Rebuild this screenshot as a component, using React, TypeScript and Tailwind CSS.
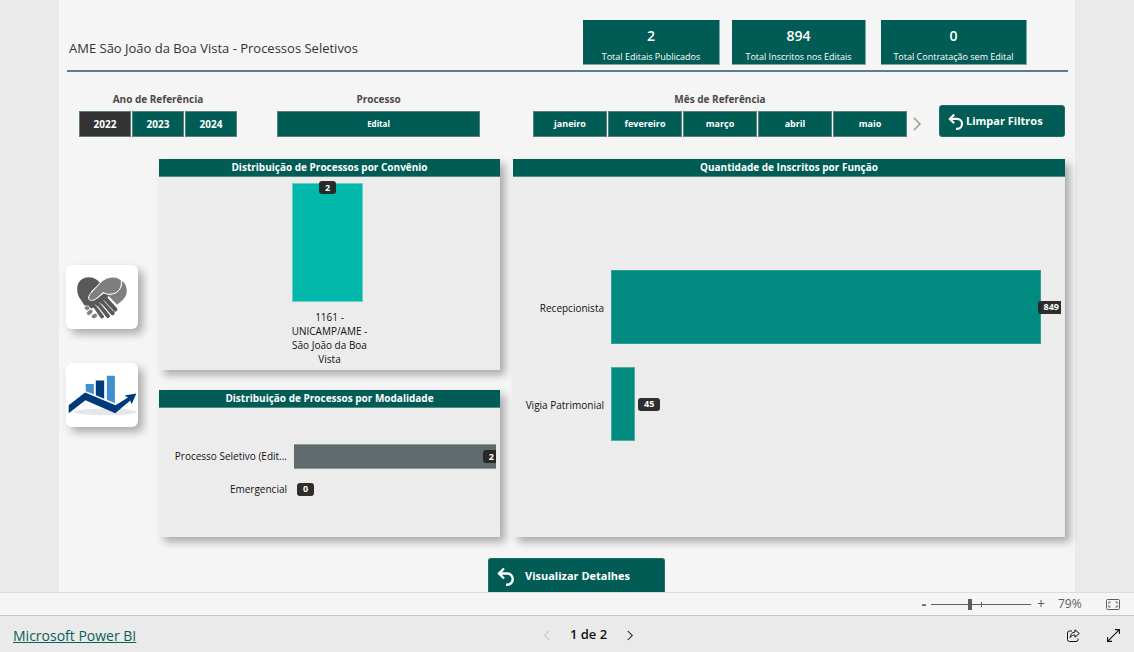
import { ReactNode } from "react";
import clsx from "clsx";

const CARDS = [
  { value: "2", label: "Total Editais Publicados", className: "w-[137px]" },
  { value: "894", label: "Total Inscritos nos Editais", className: "w-[134px]" },
  { value: "0", label: "Total Contratação sem Edital", className: "w-[146px]" },
];

const YEARS = ["2022", "2023", "2024"];
const MONTHS = ["janeiro", "fevereiro", "março", "abril", "maio"];

function UndoIcon({ className }: { className?: string }) {
  return (
    <svg
      viewBox="0 0 18 20"
      className={className}
      fill="none"
      stroke="currentColor"
      strokeWidth="2.4"
      aria-hidden="true"
    >
      <path d="M7 1.5 2 6.5l5 5" />
      <path d="M2 6.5h8.2a5.6 5.6 0 0 1 0 11.2H9" />
    </svg>
  );
}

function Chevron({ left, className }: { left?: boolean; className?: string }) {
  return (
    <svg
      viewBox="0 0 8 14"
      className={className}
      fill="none"
      stroke="currentColor"
      strokeWidth="1.4"
      aria-hidden="true"
    >
      <path d={left ? "M7 1 1 7l6 6" : "M1 1l6 6-6 6"} />
    </svg>
  );
}

function HandshakeIcon() {
  return (
    <svg viewBox="78 78 156 130" className="h-[43px] w-[52px]" aria-hidden="true">
      <path
        d="M92 150C84 140 81 128 81 117c0-20 14-35 34-35 15 0 27 6 35 17l-27 26v30l-20 6z"
        fill="#595959"
      />
      <path
        d="M217 93c11 8 14 22 14 31 0 16-12 27-29 41l-30-30c24 0 47-14 45-42z"
        fill="#7f7f7f"
      />
      <g stroke="#595959" strokeLinecap="round" fill="none">
        <path d="M162 141l34 38" strokeWidth="13" />
        <path d="M152 148l36 42" strokeWidth="13" />
        <path d="M140 154l34 45" strokeWidth="12" />
        <path d="M126 156l30 44" strokeWidth="12" />
      </g>
      <path d="M92 149c20 12 42 5 58-10l12-9 15 5-13 25-40 16-22-10z" fill="#595959" />
      <g stroke="#fff" strokeWidth="2" fill="none" strokeLinecap="round">
        <path d="M162 153l27 30M149 159l30 34M136 165l27 34" />
      </g>
      <path
        d="M151 98c10-11 24-17 39-17 8 0 16 3 24 9 4 21-7 41-32 43-8 1-15-1-22-5-7 4-11 11-19 17-9 7-19 9-24 4-4-5-1-13 6-20z"
        fill="#7f7f7f"
        stroke="#fff"
        strokeWidth="3"
      />
      <g fill="#7f7f7f" stroke="#fff" strokeWidth="2">
        <ellipse cx="111" cy="175" rx="8" ry="7" />
        <ellipse cx="119" cy="188" rx="11" ry="7" transform="rotate(-40 119 188)" />
        <ellipse cx="133" cy="199" rx="10" ry="7" transform="rotate(-30 133 199)" />
      </g>
    </svg>
  );
}

function GrowthIcon() {
  return (
    <svg viewBox="52 374 206 122" className="h-[41px] w-[69px]" aria-hidden="true">
      <ellipse cx="164" cy="484" rx="93" ry="10" fill="#e6e6e6" />
      <path d="M105 401h24v30l-24-9z" fill="#4190cd" />
      <path d="M135 390h25v55l-25-11z" fill="#003a7b" />
      <path d="M168 376h24v82l-24-10z" fill="#4190cd" />
      <path
        d="M54 464l49-38 91 38 37-23-10-6 35-6-14 32-4-11-45 38-89-39-50 39z"
        fill="#003a7b"
      />
    </svg>
  );
}

function DataLabel({ children, clipped }: { children: ReactNode; clipped?: boolean }) {
  return (
    <span
      className={clsx(
        "flex h-[13px] shrink-0 items-center justify-center bg-[#252423]/95 pl-1.5 text-[9px] font-bold text-white",
        clipped ? "rounded-l-[3px] pr-0.5" : "rounded-[3px] pr-1.5"
      )}
    >
      {children}
    </span>
  );
}

function Panel({
  title,
  className,
  children,
}: {
  title: string;
  className?: string;
  children: ReactNode;
}) {
  return (
    <section
      className={clsx(
        "flex flex-col bg-[#ececec] shadow-[5px_5px_8px_rgba(0,0,0,0.3)]",
        className
      )}
    >
      <h2 className="h-[18px] border-b border-[#4f8a85] bg-[#015c55] text-center text-[10px] leading-4 font-bold text-white">
        {title}
      </h2>
      {children}
    </section>
  );
}

function Slicer({
  title,
  options,
  selected,
  buttonClassName,
}: {
  title: string;
  options: string[];
  selected?: string;
  buttonClassName: string;
}) {
  return (
    <fieldset>
      <legend className="mx-auto h-5 text-center text-[10px] leading-4 font-bold text-[#4a4a4a]">
        {title}
      </legend>
      <div className="flex gap-px">
        {options.map((option) => (
          <button
            key={option}
            type="button"
            aria-pressed={option === selected}
            className={clsx(
              "h-[26px] border border-[#5c7d7a] font-bold text-white",
              option === selected ? "bg-[#333]" : "bg-[#015c55]",
              buttonClassName
            )}
          >
            {option}
          </button>
        ))}
      </div>
    </fieldset>
  );
}

function Report() {
  return (
    <main className="bg-[#f5f5f5] pt-5">
      <header className="mr-[7px] ml-2 flex h-[52px] items-start border-b-2 border-[#5b7f8a] pr-[41px] pl-0.5">
        <h1 className="flex-1 pt-4 text-[13px] leading-6 text-[#333]">
          AME São João da Boa Vista - Processos Seletivos
        </h1>
        <div className="grid grid-cols-[149px_149px_146px]">
          {CARDS.map((card) => (
            <div
              key={card.label}
              className={clsx(
                "flex h-[45px] flex-col items-center border-r border-b border-[#7fa8a5] bg-[#015c55] text-white",
                card.className
              )}
            >
              <span className="h-[31px] text-sm leading-8 font-semibold">{card.value}</span>
              <span className="text-[9px] leading-3 whitespace-nowrap">{card.label}</span>
            </div>
          ))}
        </div>
      </header>

      <div className="flex items-start pt-[19px] pr-2.5 pl-5">
        <Slicer
          title="Ano de Referência"
          options={YEARS}
          selected="2022"
          buttonClassName="w-[52px] text-[10px]"
        />
        <div className="ml-10">
          <Slicer title="Processo" options={["Edital"]} buttonClassName="w-[203px] text-[8px]" />
        </div>
        <div className="ml-[53px] flex items-end gap-1.5">
          <Slicer title="Mês de Referência" options={MONTHS} buttonClassName="w-[74px] text-[9px]" />
          <button type="button" aria-label="Próximos meses" className="h-[26px] text-[#a19078]">
            <Chevron className="h-3.5 w-2" />
          </button>
        </div>
        <button
          type="button"
          className="mt-3.5 ml-auto flex h-8 w-[126px] items-center gap-0.5 rounded-[3px] border border-[#1d6e67] bg-[#015c55] pt-px pl-2 text-[11px] font-bold text-white"
        >
          <UndoIcon className="h-[18px] w-4" />
          Limpar Filtros
        </button>
      </div>

      <div className="flex gap-[21px] pt-[22px] pr-2.5 pl-[7px]">
        <nav className="flex flex-col gap-[34px] pt-[106px]">
          <button
            type="button"
            aria-label="Convênios"
            className="flex h-16 w-[72px] items-center justify-center rounded-md bg-white shadow-[5px_5px_8px_rgba(0,0,0,0.3)]"
          >
            <HandshakeIcon />
          </button>
          <button
            type="button"
            aria-label="Indicadores"
            className="flex h-16 w-[72px] items-center justify-center rounded-md bg-white shadow-[5px_5px_8px_rgba(0,0,0,0.3)]"
          >
            <GrowthIcon />
          </button>
        </nav>

        <div className="grid flex-1 grid-cols-[341fr_552fr] gap-[13px] text-[10px] text-[#111]">
          <div className="flex flex-col gap-5">
            <Panel title="Distribuição de Processos por Convênio" className="h-[211px]">
              <div className="flex flex-col items-center pt-1.5">
                <div className="mr-1 flex h-[119px] w-[71px] items-start justify-center border border-[#6bcfc7] bg-[#01b8aa]">
                  <div className="-mt-[3px]">
                    <DataLabel>2</DataLabel>
                  </div>
                </div>
                <p className="w-[88px] pt-2 text-center leading-3.5">
                  1161 - UNICAMP/AME - São João da Boa Vista
                </p>
              </div>
            </Panel>

            <Panel title="Distribuição de Processos por Modalidade" className="h-[147px]">
              <div className="grid grid-cols-[128px_1fr] gap-x-[7px] gap-y-3 pt-9 pr-1">
                <span className="self-center text-right">Processo Seletivo (Edit...</span>
                <div className="flex h-[25px] items-center justify-end border-y border-[#8f9999] bg-[#5f6b6d]">
                  <DataLabel clipped>2</DataLabel>
                </div>
                <span className="text-right leading-4">Emergencial</span>
                <div className="flex items-center pl-[3px]">
                  <DataLabel>0</DataLabel>
                </div>
              </div>
            </Panel>
          </div>

          <Panel title="Quantidade de Inscritos por Função">
            <div className="grid grid-cols-[91px_1fr] gap-x-[7px] gap-y-[23px] pt-[93px] pr-1">
              <span className="self-center pt-0.5 text-right">Recepcionista</span>
              <div className="flex items-center">
                <div className="h-[74px] flex-1 border border-[#2f9d94] bg-[#018a80]" />
                <div className="-ml-[3px]">
                  <DataLabel clipped>849</DataLabel>
                </div>
              </div>
              <span className="self-center pt-0.5 text-right">Vigia Patrimonial</span>
              <div className="flex items-center gap-[3px]">
                <div className="h-[74px] w-6 border border-[#4faaa2] bg-[#018a80]" />
                <DataLabel>45</DataLabel>
              </div>
            </div>
          </Panel>
        </div>
      </div>

      <div className="flex justify-center pt-[21px] pl-[19px]">
        <button
          type="button"
          className="flex h-[34px] w-[177px] items-center gap-2.5 rounded-t-[3px] border border-b-0 border-[#1d6e67] bg-[#015c55] pt-0.5 pl-2 text-[11px] font-bold text-white"
        >
          <UndoIcon className="h-5 w-[18px]" />
          Visualizar Detalhes
        </button>
      </div>
    </main>
  );
}

function ZoomBar() {
  return (
    <div className="flex h-6 items-center justify-end border-t border-b border-t-[#dcdcdc] border-b-[#c8c8c8] bg-[#f5f5f5] pr-3.5 text-[#605e5c]">
      <button type="button" aria-label="Reduzir" className="w-3.5 text-sm leading-4 font-bold">
        -
      </button>
      <div className="relative flex w-[100px] items-center">
        <input
          type="range"
          aria-label="Zoom"
          defaultValue={39}
          className="h-[11px] w-full appearance-none bg-[linear-gradient(#605e5c,#605e5c)] bg-[length:100%_1px] bg-center bg-no-repeat [&::-webkit-slider-thumb]:h-[11px] [&::-webkit-slider-thumb]:w-1 [&::-webkit-slider-thumb]:appearance-none [&::-webkit-slider-thumb]:bg-[#605e5c]"
        />
        <span className="absolute left-1/2 h-[5px] w-px bg-[#605e5c]" />
      </div>
      <button type="button" aria-label="Ampliar" className="w-5 text-sm leading-4">
        +
      </button>
      <span className="w-10 pl-[7px] text-xs">79%</span>
      <button type="button" aria-label="Ajustar à página" className="ml-[15px]">
        <svg viewBox="0 0 14 11" className="h-[11px] w-3.5" fill="none" stroke="currentColor" aria-hidden="true">
          <rect x="0.5" y="0.5" width="13" height="10" rx="1" />
          <path d="M4.5 3H2.8v1.7M9.5 3h1.7v1.7M4.5 8H2.8V6.3M9.5 8h1.7V6.3" />
        </svg>
      </button>
    </div>
  );
}

function Footer() {
  return (
    <footer className="grid h-9 grid-cols-3 items-center bg-[#eaeaea] pr-3.5 pl-[13px] text-[#111]">
      <a href="#" className="pt-1 text-sm text-[#0b6057] underline">
        Microsoft Power BI
      </a>
      <div className="ml-11 flex items-center justify-center gap-5 pt-0.5 text-[13px] font-semibold">
        <button type="button" disabled aria-label="Página anterior" className="text-[#c0c0c0]">
          <Chevron left className="h-[11px] w-1.5" />
        </button>
        1 de 2
        <button type="button" aria-label="Próxima página">
          <Chevron className="h-[11px] w-1.5" />
        </button>
      </div>
      <div className="flex items-center justify-end gap-[27px] pt-0.5">
        <button type="button" aria-label="Compartilhar">
          <svg viewBox="0 0 13 13" className="size-[13px]" fill="none" stroke="currentColor" strokeLinejoin="round" aria-hidden="true">
            <path d="M5 2H2.500a2 2 0 0 0-2 2v6.500a2 2 0 0 0 2 2H9a2 2 0 0 0 2-2V9.500" />
            <path d="M8 .8 12.300 4.500 8 8.200V6C6 6 4.500 6.700 3.200 8.500 3.500 5.500 5 3.200 8 3z" />
          </svg>
        </button>
        <button type="button" aria-label="Tela cheia">
          <svg viewBox="0 0 13 13" className="size-[13px]" fill="none" stroke="currentColor" strokeWidth="1.1" aria-hidden="true">
            <path d="M.6 12.400 12.400.6M8 .6h4.400V5M.6 8v4.400H5" />
          </svg>
        </button>
      </div>
    </footer>
  );
}

export default function App() {
  return (
    <div className="flex min-h-screen flex-col bg-[#eaeaea] font-['Open_Sans','Noto_Sans',sans-serif]">
      <div className="flex-1 px-[59px]">
        <Report />
      </div>
      <ZoomBar />
      <Footer />
    </div>
  );
}
